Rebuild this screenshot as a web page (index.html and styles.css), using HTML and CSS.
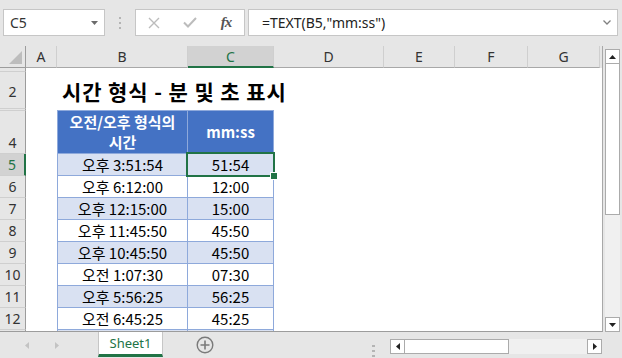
FILE: index.html
```html
<!DOCTYPE html>
<html>
<head>
    <title>시간 형식 - 분 및 초 표시</title>
    <link rel="stylesheet" href="styles.css">
</head>
<body>

<div class="excel">
    <div class="toolbar">
        <div class="name-box">
            <span>C5</span>
            <svg width="7" height="4" viewBox="0 0 7 4"><path d="M0 0H7L3.5 4Z" fill="#6b6b6b"/></svg>
        </div>
        <div class="grip">
            <svg width="2" height="12" viewBox="0 0 2 12"><rect y="0" width="2" height="2" fill="#b4b4b4"/><rect y="5" width="2" height="2" fill="#b4b4b4"/><rect y="10" width="2" height="2" fill="#b4b4b4"/></svg>
        </div>
        <div class="fx-box">
            <span class="slot"><svg width="12" height="12" viewBox="0 0 12 12"><path d="M1 1L11 11M11 1L1 11" stroke="#bcbcbc" stroke-width="1.4" fill="none"/></svg></span>
            <span class="slot"><svg width="14" height="11" viewBox="0 0 14 11"><path d="M1 5.5L5 9.5L13 1" stroke="#bcbcbc" stroke-width="2" fill="none"/></svg></span>
            <span class="slot fx">fx</span>
        </div>
        <div class="formula">
            <span>=TEXT(B5,"mm:ss")</span>
            <svg width="8" height="5" viewBox="0 0 8 5"><path d="M0.5 0.5L4 4L7.5 0.5" stroke="#808080" stroke-width="1.3" fill="none"/></svg>
        </div>
    </div>

    <div class="main">
        <div class="sheet">
            <div class="row col-heads">
                <div class="corner">
                    <svg width="15" height="15" viewBox="0 0 15 15"><path d="M14 1V14H1Z" fill="#bdbdbd"/></svg>
                </div>
                <div class="ch a">A</div>
                <div class="ch b">B</div>
                <div class="ch c selected">C</div>
                <div class="ch d">D</div>
                <div class="ch e">E</div>
                <div class="ch f">F</div>
                <div class="ch g">G</div>
            </div>

            <div class="row r1">
                <div class="rh"></div>
            </div>
            <div class="row r2">
                <div class="rh">2</div>
                <div class="cell a"></div>
                <div class="cell b title">시간 형식 - 분 및 초 표시</div>
            </div>
            <div class="row r3">
                <div class="rh"></div>
                <div class="cell a"></div>
                <div class="cell b edge"></div>
                <div class="cell c edge"></div>
            </div>
            <div class="row r4">
                <div class="rh bottom">4</div>
                <div class="cell a"></div>
                <div class="cell b t hd">오전/오후 형식의<br>시간</div>
                <div class="cell c t hd">mm:ss</div>
            </div>
            <div class="row band">
                <div class="rh selected">5</div>
                <div class="cell a"></div>
                <div class="cell b t">오후 3:51:54</div>
                <div class="cell c t active">51:54<div class="sel"><div class="handle"></div></div></div>
            </div>
            <div class="row">
                <div class="rh">6</div>
                <div class="cell a"></div>
                <div class="cell b t">오후 6:12:00</div>
                <div class="cell c t">12:00</div>
            </div>
            <div class="row band">
                <div class="rh">7</div>
                <div class="cell a"></div>
                <div class="cell b t">오후 12:15:00</div>
                <div class="cell c t">15:00</div>
            </div>
            <div class="row">
                <div class="rh">8</div>
                <div class="cell a"></div>
                <div class="cell b t">오후 11:45:50</div>
                <div class="cell c t">45:50</div>
            </div>
            <div class="row band">
                <div class="rh">9</div>
                <div class="cell a"></div>
                <div class="cell b t">오후 10:45:50</div>
                <div class="cell c t">45:50</div>
            </div>
            <div class="row">
                <div class="rh">10</div>
                <div class="cell a"></div>
                <div class="cell b t">오전 1:07:30</div>
                <div class="cell c t">07:30</div>
            </div>
            <div class="row band">
                <div class="rh">11</div>
                <div class="cell a"></div>
                <div class="cell b t">오후 5:56:25</div>
                <div class="cell c t">56:25</div>
            </div>
            <div class="row">
                <div class="rh">12</div>
                <div class="cell a"></div>
                <div class="cell b t">오전 6:45:25</div>
                <div class="cell c t">45:25</div>
            </div>
            <div class="row band">
                <div class="rh"></div>
                <div class="cell a"></div>
                <div class="cell b t"></div>
                <div class="cell c t"></div>
            </div>
        </div>

        <div class="vscroll">
            <div class="vtrack">
                <div class="sbtn"><svg width="7" height="4" viewBox="0 0 7 4"><path d="M3.5 0L7 4H0Z" fill="#222"/></svg></div>
                <div class="vthumb"></div>
                <div class="vspace"></div>
                <div class="sbtn"><svg width="7" height="4" viewBox="0 0 7 4"><path d="M0 0H7L3.5 4Z" fill="#222"/></svg></div>
            </div>
        </div>
    </div>

    <div class="tabbar">
        <div class="nav">
            <svg width="4" height="7" viewBox="0 0 4 7"><path d="M4 0V7L0 3.5Z" fill="#c3c3c3"/></svg>
            <svg width="4" height="7" viewBox="0 0 4 7"><path d="M0 0V7L4 3.5Z" fill="#c3c3c3"/></svg>
        </div>
        <div class="sheet-tab">Sheet1</div>
        <div class="add">
            <svg width="18" height="18" viewBox="0 0 18 18"><circle cx="9" cy="9" r="7.8" stroke="#7a7a7a" stroke-width="1.4" fill="none"/><path d="M9 4.5V13.5M4.5 9H13.5" stroke="#7a7a7a" stroke-width="1.6"/></svg>
        </div>
        <div class="hgrip">
            <svg width="3" height="12" viewBox="0 0 3 12"><rect y="0" width="3" height="2" fill="#b4b4b4"/><rect y="5" width="3" height="2" fill="#b4b4b4"/><rect y="10" width="3" height="2" fill="#b4b4b4"/></svg>
        </div>
        <div class="hscroll">
            <div class="sbtn"><svg width="4" height="7" viewBox="0 0 4 7"><path d="M4 0V7L0 3.5Z" fill="#222"/></svg></div>
            <div class="hthumb"></div>
            <div class="hspace"></div>
            <div class="sbtn"><svg width="4" height="7" viewBox="0 0 4 7"><path d="M0 0V7L4 3.5Z" fill="#222"/></svg></div>
        </div>
    </div>
</div>

</body>
</html>
```

FILE: styles.css
```css
body {
    margin: 0;
    font-family: "Noto Sans", sans-serif;
}

.excel {
    width: 622px;
    height: 358px;
    overflow: hidden;
    background-color: #e6e6e6;
    display: flex;
    flex-direction: column;
}

/* formula bar */
.toolbar {
    height: 46px;
    flex: none;
    display: flex;
    align-items: flex-start;
    padding: 9px 0 0 3px;
    box-sizing: border-box;
}

.name-box, .fx-box, .formula {
    height: 27px;
    box-sizing: border-box;
    background-color: #fff;
    border: 1px solid #c6c6c6;
    display: flex;
    align-items: center;
}

.name-box {
    width: 102px;
    justify-content: space-between;
    padding: 0 6px 0 6px;
    font-size: 14px;
    color: #333;
}

.grip {
    width: 30px;
    display: flex;
    justify-content: center;
    padding-top: 8px;
}

.fx-box {
    width: 110px;
}

.fx-box .slot {
    width: 36px;
    display: flex;
    justify-content: center;
}

.fx-box .fx {
    font-family: "Liberation Serif", serif;
    font-style: italic;
    font-weight: bold;
    font-size: 15px;
    color: #555;
    letter-spacing: -1px;
}

.formula {
    width: 370px;
    margin-left: 3px;
    padding: 0 6px 0 13px;
    justify-content: space-between;
    font-size: 14px;
    color: #222;
}

/* sheet */
.main {
    height: 286px;
    flex: none;
    display: flex;
}

.sheet {
    width: 603px;
    height: 286px;
    box-sizing: border-box;
    background-color: #fff;
    border-right: 1px solid #a8a8a8;
    border-bottom: 1px solid #9c9c9c;
    overflow: hidden;
}

.row {
    display: flex;
    height: 22px;
}

.row.r1 { height: 4px; }
.row.r2 { height: 37px; }
.row.r3 { height: 2px; }
.row.r4 { height: 43px; }

.col-heads {
    background-color: #e6e6e6;
}

.corner {
    width: 26px;
    flex: none;
    box-sizing: border-box;
    border-right: 1px solid #9c9c9c;
    border-bottom: 1px solid #9c9c9c;
    display: flex;
    align-items: flex-end;
    justify-content: flex-end;
    padding: 0 2px 2px 0;
}

.ch {
    flex: none;
    box-sizing: border-box;
    border-right: 1px solid #cfcfcf;
    border-bottom: 1px solid #a8a8a8;
    display: flex;
    align-items: center;
    justify-content: center;
    font-size: 14px;
    color: #333;
}

.ch.selected {
    background-color: #d2d2d2;
    color: #217346;
    border-bottom: 2px solid #217346;
}

.a { width: 31px; }
.b { width: 131px; }
.c { width: 86px; }
.d { width: 110px; }
.e { width: 71px; }
.f { width: 73px; }
.g { width: 72px; }

.rh {
    width: 26px;
    flex: none;
    box-sizing: border-box;
    background-color: #e6e6e6;
    border-right: 1px solid #9c9c9c;
    border-bottom: 1px solid #cfcfcf;
    display: flex;
    align-items: center;
    justify-content: center;
    font-size: 14px;
    color: #333;
}

.r2 .rh {
    padding-top: 3px;
}

.rh.bottom {
    align-items: flex-end;
    padding-bottom: 1px;
}

.rh.selected {
    background-color: #d2d2d2;
    color: #217346;
    border-right: 2px solid #217346;
}

.cell {
    flex: none;
    box-sizing: border-box;
}

.title {
    display: flex;
    align-items: center;
    padding-left: 5px;
    white-space: nowrap;
    font-family: "Noto Sans CJK KR", sans-serif;
    font-size: 21px;
    font-weight: bold;
    letter-spacing: 0.9px;
    color: #000;
}

.edge {
    border-bottom: 1px solid #8ea9db;
}

.t {
    border-right: 1px solid #8ea9db;
    border-bottom: 1px solid #8ea9db;
    display: flex;
    align-items: center;
    justify-content: center;
    text-align: center;
    font-family: "Noto Sans CJK KR", sans-serif;
    font-size: 15px;
    color: #000;
    white-space: nowrap;
}

.b.t {
    border-left: 1px solid #8ea9db;
}

.band .t {
    background-color: #d9e1f2;
}

.t.hd {
    background-color: #4472c4;
    color: #fff;
    font-weight: bold;
    line-height: 20px;
}

.active {
    position: relative;
}

.sel {
    position: absolute;
    left: -2px;
    top: -2px;
    right: -2px;
    bottom: -2px;
    border: 2px solid #217346;
}

.handle {
    position: absolute;
    right: -5px;
    bottom: -5px;
    width: 6px;
    height: 6px;
    background-color: #217346;
    border: 1px solid #fff;
}

/* scrollbars */
.vscroll {
    width: 19px;
    padding: 3px 0 0 2px;
    box-sizing: border-box;
}

.vtrack {
    width: 15px;
    height: 283px;
    background-color: #f0f0f0;
    display: flex;
    flex-direction: column;
}

.sbtn {
    width: 15px;
    height: 15px;
    flex: none;
    box-sizing: border-box;
    background-color: #fff;
    border: 1px solid #ababab;
    display: flex;
    align-items: center;
    justify-content: center;
}

.vthumb {
    height: 151px;
    flex: none;
    box-sizing: border-box;
    background-color: #fff;
    border: 1px solid #ababab;
    border-top: none;
}

.vspace, .hspace {
    flex: 1;
}

/* sheet tabs */
.tabbar {
    height: 26px;
    flex: none;
    display: flex;
    align-items: flex-start;
}

.nav {
    width: 98px;
    height: 26px;
    display: flex;
    align-items: center;
    gap: 26px;
    padding-left: 25px;
    box-sizing: border-box;
}

.sheet-tab {
    width: 65px;
    height: 25px;
    box-sizing: border-box;
    background-color: #fff;
    border-left: 1px solid #c6c6c6;
    border-right: 1px solid #c6c6c6;
    border-bottom: 3px solid #217346;
    display: flex;
    align-items: center;
    justify-content: center;
    font-size: 13px;
    color: #217346;
}

.add {
    margin: 4px 0 0 33px;
    height: 18px;
}

.hgrip {
    margin: 8px 0 0 158px;
}

.hscroll {
    width: 212px;
    height: 15px;
    margin: 7px 0 0 15px;
    background-color: #f0f0f0;
    display: flex;
}

.hthumb {
    width: 104px;
    flex: none;
    box-sizing: border-box;
    background-color: #fff;
    border: 1px solid #ababab;
    border-left: none;
}
```
